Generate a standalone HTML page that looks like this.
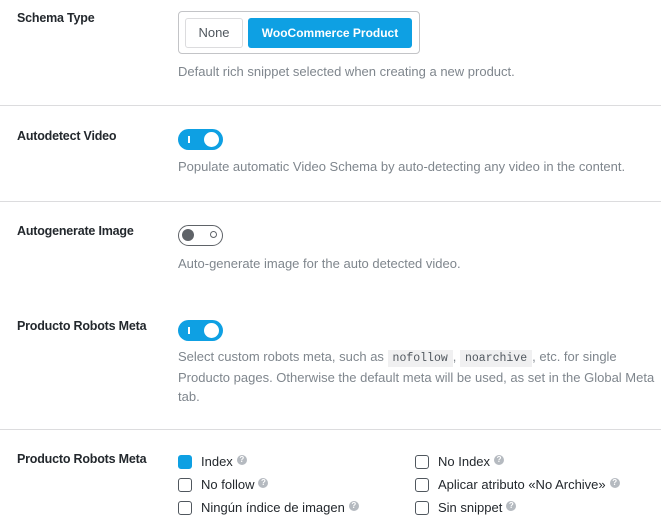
<!DOCTYPE html>
<html><head><style>
*{margin:0;padding:0;box-sizing:border-box}
body{width:668px;height:521px;background:#fff;font-family:"Liberation Sans",sans-serif;font-size:13px;color:#23282d;position:relative;overflow:hidden}
.a{position:absolute;white-space:nowrap}
.l{font-weight:bold;font-size:12.5px;left:17px;color:#23282d;letter-spacing:-0.2px}
.d{color:#7f868d;left:178px;font-size:13px;line-height:19px}
.hr{position:absolute;left:0;width:661px;height:1px;background:#dcdcde}
.tg{position:absolute;left:178px;width:45px;height:21px;border-radius:11px}
.on{background:#0ea0e3}
.on:before{content:"";position:absolute;left:10px;top:7px;width:2px;height:7px;background:#fff}
.on:after{content:"";position:absolute;right:4px;top:3px;width:15px;height:15px;border-radius:50%;background:#fff}
.off{border:1.5px solid #5f6368;background:#fff}
.off:before{content:"";position:absolute;left:3px;top:3px;width:12px;height:12px;border-radius:50%;background:#5f6368}
.off:after{content:"";position:absolute;right:5px;top:5px;width:5px;height:5px;border-radius:50%;border:1.5px solid #5f6368}
.cb{position:absolute;width:14px;height:14px;border:1.3px solid #50575e;border-radius:3px;background:#fff}
.cb.c{background:#0ea0e3;border-color:#0ea0e3}
.q{display:inline-block;width:10px;height:10px;border-radius:50%;background:#b5bac0;color:#fff;font-size:8px;line-height:10px;text-align:center;font-weight:bold;vertical-align:4px;margin-left:4px}
code{font-family:"Liberation Mono",monospace;font-size:11.5px;background:#f0f0f1;padding:2px 5px;color:#50575e}
</style></head><body>
<div class="a l" style="top:11px">Schema Type</div>
<div class="a" style="left:178px;top:11px;width:242px;height:43px;border:1px solid #c3c4c7;border-radius:4px"></div>
<div class="a" style="left:185px;top:18px;width:58px;height:30px;border:1px solid #dcdcde;border-radius:3px;text-align:center;line-height:28px;color:#50575e">None</div>
<div class="a" style="left:248px;top:18px;width:164px;height:30px;background:#0ea0e3;border-radius:3px;text-align:center;line-height:30px;color:#fff;font-weight:bold;font-size:12px">WooCommerce Product</div>
<div class="a d" style="top:62px">Default rich snippet selected when creating a new product.</div>
<div class="hr" style="top:105px"></div>
<div class="a l" style="top:129px">Autodetect Video</div>
<div class="tg on" style="top:129px"></div>
<div class="a d" style="top:157px">Populate automatic Video Schema by auto-detecting any video in the content.</div>
<div class="hr" style="top:201px"></div>
<div class="a l" style="top:224px">Autogenerate Image</div>
<div class="tg off" style="top:225px"></div>
<div class="a d" style="top:254px">Auto-generate image for the auto detected video.</div>
<div class="a l" style="top:319px">Producto Robots Meta</div>
<div class="tg on" style="top:320px"></div>
<div class="a d" style="top:347px">Select custom robots meta, such as <code>nofollow</code>, <code>noarchive</code>, etc. for single<br>Producto pages. Otherwise the default meta will be used, as set in the Global Meta<br>tab.</div>
<div class="hr" style="top:429px"></div>
<div class="a l" style="top:452px">Producto Robots Meta</div>
<div class="cb c" style="left:178px;top:455px"></div><div class="a" style="left:201px;top:454px">Index<span class="q">?</span></div>
<div class="cb" style="left:178px;top:478px"></div><div class="a" style="left:201px;top:477px">No follow<span class="q">?</span></div>
<div class="cb" style="left:178px;top:501px"></div><div class="a" style="left:201px;top:500px">Ningún índice de imagen<span class="q">?</span></div>
<div class="cb" style="left:415px;top:455px"></div><div class="a" style="left:438px;top:454px">No Index<span class="q">?</span></div>
<div class="cb" style="left:415px;top:478px"></div><div class="a" style="left:438px;top:477px">Aplicar atributo «No Archive»<span class="q">?</span></div>
<div class="cb" style="left:415px;top:501px"></div><div class="a" style="left:438px;top:500px">Sin snippet<span class="q">?</span></div>
</body></html>
